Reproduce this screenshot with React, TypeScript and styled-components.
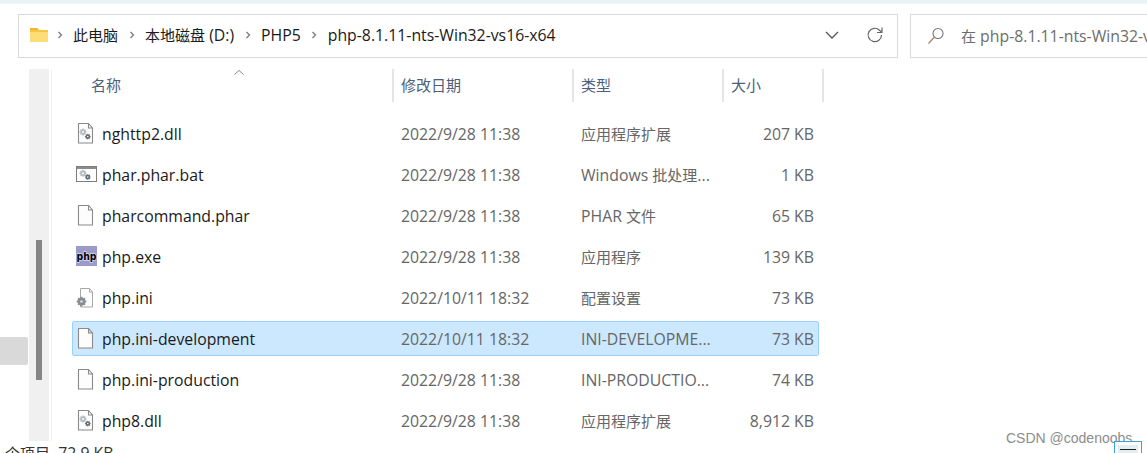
import React from "react";
import styled, { createGlobalStyle } from "styled-components";

const FONT = `"Open Sans", "Noto Sans", "Noto Sans CJK SC", sans-serif`;

const Global = createGlobalStyle`
  html, body { margin: 0; padding: 0; background: #fff; }
  * { box-sizing: border-box; }
`;

const Page = styled.div`
  position: relative;
  width: 1147px;
  height: 453px;
  overflow: hidden;
  background: #fff;
  font-family: ${FONT};
  font-size: 15.8px;
  display: flex;
  flex-direction: column;
`;

const Cjk = styled.span`
  font-size: 15px;
  font-family: "Noto Sans CJK SC", sans-serif;
`;

const Mixed = ({ text }: { text: string }) => (
  <>
    {text.split(/([\u4e00-\u9fff]+)/).map((part, i) =>
      i % 2 === 1 ? <Cjk key={i}>{part}</Cjk> : part
    )}
  </>
);

const TopStrip = styled.div`
  height: 4px;
  flex: none;
  background: #e7f3f6;
  border-bottom: 1px solid #f0f5f6;
`;

const Toolbar = styled.div`
  flex: none;
  display: flex;
  gap: 12px;
  padding: 10px 0 0 18px;
  height: 65px;
`;

const AddressBar = styled.div`
  width: 880px;
  height: 44px;
  border: 1px solid #d9d9d9;
  display: flex;
  align-items: center;
  padding: 0 0 2px 11px;
  color: #1a1a1a;
`;

const FolderSlot = styled.span`
  display: flex;
  flex: none;
  margin-right: -3px;
`;

const Crumb = styled.span`
  white-space: nowrap;
`;

const CrumbSep = styled.span`
  width: 27px;
  display: flex;
  justify-content: center;
  flex: none;
`;

const AddressTools = styled.div`
  margin-left: auto;
  display: flex;
  align-items: center;
  gap: 26px;
  padding: 0 13px 0 0;
`;

const SearchBox = styled.div`
  flex: 1;
  height: 44px;
  border: 1px solid #d9d9d9;
  border-right: none;
  display: flex;
  align-items: center;
  padding: 0 0 1px 16px;
  gap: 16px;
  color: #6d6d6d;
  white-space: nowrap;
  overflow: hidden;
`;

const Body = styled.div`
  flex: 1;
  min-height: 0;
  display: flex;
`;

const NavPane = styled.div`
  width: 29px;
  flex: none;
  padding-top: 268px;
`;

const NavSelected = styled.div`
  width: 28px;
  height: 28px;
  background: #d9d9d9;
  border-radius: 0 2px 2px 0;
`;

const ScrollTrack = styled.div`
  width: 20px;
  flex: none;
  background: #f0f0f0;
  padding: 171px 0 0 7px;
`;

const ScrollThumb = styled.div`
  width: 6px;
  height: 140px;
  background: #858585;
`;

const ListPane = styled.div`
  flex: 1;
  margin-left: 2px;
  border-left: 1px solid #f3f3f3;
  padding-left: 20px;
`;

const HeaderRow = styled.div`
  position: relative;
  display: grid;
  grid-template-columns: 321px 180px 150px 101px;
  width: 752px;
  height: 33px;
  margin-bottom: 14px;
  color: #4c607a;
`;

const HeaderCell = styled.div<{ $first?: boolean; $last?: boolean }>`
  display: flex;
  align-items: center;
  margin-left: ${(p) => (p.$first ? "0" : "-1px")};
  padding: 0 0 3px ${(p) => (p.$first ? "19px" : "7px")};
  border-left: ${(p) => (p.$first ? "none" : "2px solid #e5e5e5")};
  border-right: ${(p) => (p.$last ? "2px solid #e5e5e5" : "none")};
`;

const SortCaret = styled.svg`
  position: absolute;
  left: 161px;
  top: 0;
`;

const Rows = styled.div`
  display: flex;
  flex-direction: column;
`;

const Row = styled.div<{ $selected?: boolean }>`
  display: grid;
  grid-template-columns: 321px 180px 150px 96px;
  width: 747px;
  height: 35px;
  margin-bottom: 6px;
  align-items: center;
  color: #666;
  background: ${(p) => (p.$selected ? "#cce8ff" : "transparent")};
  border: 1px solid ${(p) => (p.$selected ? "#99d1ff" : "transparent")};
  border-radius: 2px;
`;

const NameCell = styled.div`
  display: flex;
  align-items: center;
  color: #1a1a1a;
  padding-left: 3px;
`;

const IconBox = styled.span`
  width: 26px;
  height: 24px;
  flex: none;
  display: flex;
  align-items: center;
`;

const MetaCell = styled.div`
  padding-left: 7px;
  white-space: nowrap;
`;

const SizeCell = styled.div`
  text-align: right;
  padding-right: 6px;
`;

const StatusText = styled.div`
  flex: none;
  height: 12px;
  padding: 3px 0 0 5px;
  line-height: 18px;
  color: #333;
  white-space: nowrap;
`;

const Watermark = styled.div`
  position: absolute;
  left: 1006px;
  top: 430px;
  font-size: 14px;
  color: #8c8c8c;
  white-space: nowrap;
  font-family: "Liberation Sans", sans-serif;
`;

const MinButton = styled.div`
  position: absolute;
  left: 1114px;
  top: 441px;
  width: 28px;
  height: 14px;
  border: 1px solid #3aa3dc;
  background: #fff;
  padding: 3px 3px 0;
`;

const MinInner = styled.div`
  height: 100%;
  background: #e3eef2;
  padding: 4px 2px 0;
`;

const MinDash = styled.div`
  height: 1px;
  background: #222;
`;

const Chevron = () => (
  <svg width="8" height="10" viewBox="0 0 8 10">
    <path d="M2.5 2l3 3-3 3" fill="none" stroke="#7a7a7a" strokeWidth="1.3" />
  </svg>
);

const Folder = () => (
  <svg width="19" height="16" viewBox="0 0 19 16">
    <path d="M0 1h7l2 2h9v12H0z" fill="#f6c644" />
    <path d="M0 5h18v10H0z" fill="#fedd77" />
    <path d="M0 1h7l2 2H0z" fill="#eeb52e" />
  </svg>
);

const Gear = ({ x, y, r, c, hole = "#fff" }: { x: number; y: number; r: number; c: string; hole?: string }) => (
  <g>
    {[0, 45, 90, 135].map((a) => (
      <rect
        key={a}
        x={x - r * 0.28}
        y={y - r * 1.25}
        width={r * 0.56}
        height={r * 2.5}
        fill={c}
        transform={`rotate(${a} ${x} ${y})`}
      />
    ))}
    <circle cx={x} cy={y} r={r * 0.9} fill={c} />
    <circle cx={x} cy={y} r={r * 0.35} fill={hole} />
  </g>
);

const DocShape = () => (
  <path d="M2.5 1.5h10l4 4.5v15h-14z M12.5 1.5v4.5h4" fill="#fdfdfd" stroke="#8a8a8a" strokeWidth="1.1" />
);

const PlainDoc = () => (
  <svg width="20" height="23" viewBox="0 0 20 23">
    <DocShape />
  </svg>
);

const DllDoc = () => (
  <svg width="20" height="23" viewBox="0 0 20 23">
    <DocShape />
    <Gear x={7} y={10} r={2.8} c="#b4bbc1" />
    <Gear x={11.8} y={14.6} r={2.2} c="#5f686f" />
  </svg>
);

const BatIcon = () => (
  <svg width="21" height="17" viewBox="0 0 21 17">
    <rect x="0.5" y="0.5" width="20" height="15" fill="#fff" stroke="#7d7d7d" />
    <rect x="1" y="1" width="19" height="2" fill="#8c8c8c" />
    <Gear x={7} y={7.2} r={2.8} c="#b4bbc1" />
    <Gear x={11.8} y={11} r={2.2} c="#5f686f" />
  </svg>
);

const PhpText = styled.text`
  font-family: "DejaVu Sans", sans-serif;
  font-weight: 700;
  font-size: 11px;
  fill: #000;
  stroke: #dcdcf2;
  stroke-width: 1.5px;
  paint-order: stroke;
`;

const PhpIcon = () => (
  <svg width="21" height="21" viewBox="0 0 21 21">
    <rect width="21" height="20" fill="#9a9acb" />
    <PhpText x="10.5" y="13.5" textAnchor="middle" textLength="20" lengthAdjust="spacingAndGlyphs">
      php
    </PhpText>
  </svg>
);

const IniIcon = () => (
  <svg width="20" height="23" viewBox="0 0 20 23">
    <path d="M4.5 2.5h9l3 3.5v15h-12z M13.5 2.5v3.5h3" fill="#fdfdfd" stroke="#a8a8a8" strokeWidth="1" />
    <Gear x={5.5} y={15.5} r={3.8} c="#858c92" hole="#d8dcdf" />
  </svg>
);

type Kind = "dll" | "bat" | "doc" | "php" | "ini";

const iconFor: Record<Kind, React.ReactNode> = {
  dll: <DllDoc />,
  bat: <BatIcon />,
  doc: <PlainDoc />,
  php: <PhpIcon />,
  ini: <IniIcon />,
};

const files: { icon: Kind; name: string; date: string; type: string; size: string; selected?: boolean }[] = [
  { icon: "dll", name: "nghttp2.dll", date: "2022/9/28 11:38", type: "应用程序扩展", size: "207 KB" },
  { icon: "bat", name: "phar.phar.bat", date: "2022/9/28 11:38", type: "Windows 批处理...", size: "1 KB" },
  { icon: "doc", name: "pharcommand.phar", date: "2022/9/28 11:38", type: "PHAR 文件", size: "65 KB" },
  { icon: "php", name: "php.exe", date: "2022/9/28 11:38", type: "应用程序", size: "139 KB" },
  { icon: "ini", name: "php.ini", date: "2022/10/11 18:32", type: "配置设置", size: "73 KB" },
  { icon: "doc", name: "php.ini-development", date: "2022/10/11 18:32", type: "INI-DEVELOPME...", size: "73 KB", selected: true },
  { icon: "doc", name: "php.ini-production", date: "2022/9/28 11:38", type: "INI-PRODUCTIO...", size: "74 KB" },
  { icon: "dll", name: "php8.dll", date: "2022/9/28 11:38", type: "应用程序扩展", size: "8,912 KB" },
];

const crumbs = ["此电脑", "本地磁盘 (D:)", "PHP5", "php-8.1.11-nts-Win32-vs16-x64"];

export default function App() {
  return (
    <Page>
      <Global />
      <TopStrip />
      <Toolbar>
        <AddressBar>
          <FolderSlot>
            <Folder />
          </FolderSlot>
          {crumbs.map((c) => (
            <React.Fragment key={c}>
              <CrumbSep>
                <Chevron />
              </CrumbSep>
              <Crumb>
                <Mixed text={c} />
              </Crumb>
            </React.Fragment>
          ))}
          <AddressTools>
            <svg width="16" height="10" viewBox="0 0 16 10">
              <path d="M2 2l6 6 6-6" fill="none" stroke="#555" strokeWidth="1.3" />
            </svg>
            <svg width="18" height="18" viewBox="0 0 18 18">
              <path d="M15.5 9a6.7 6.7 0 1 1-2-4.8L15.5 6" fill="none" stroke="#666" strokeWidth="1.2" />
              <path d="M16 1.5V6.5h-5" fill="none" stroke="#666" strokeWidth="1.2" />
            </svg>
          </AddressTools>
        </AddressBar>
        <SearchBox>
          <svg width="18" height="18" viewBox="0 0 18 18" style={{ flex: "none" }}>
            <circle cx="11" cy="6.5" r="5" fill="none" stroke="#777" strokeWidth="1.1" />
            <path d="M7.5 10L1.5 16.5" stroke="#a8866a" strokeWidth="1.3" />
          </svg>
          <span>
            <Mixed text="在 php-8.1.11-nts-Win32-vs16-x64 中搜索" />
          </span>
        </SearchBox>
      </Toolbar>
      <Body>
        <NavPane>
          <NavSelected />
        </NavPane>
        <ScrollTrack>
          <ScrollThumb />
        </ScrollTrack>
        <ListPane>
          <HeaderRow>
            <SortCaret width="12" height="7" viewBox="0 0 12 7">
              <path d="M1.5 5.5L6 1.5l4.5 4" fill="none" stroke="#888" strokeWidth="1" />
            </SortCaret>
            <HeaderCell $first>
              <Mixed text="名称" />
            </HeaderCell>
            <HeaderCell>
              <Mixed text="修改日期" />
            </HeaderCell>
            <HeaderCell>
              <Mixed text="类型" />
            </HeaderCell>
            <HeaderCell $last>
              <Mixed text="大小" />
            </HeaderCell>
          </HeaderRow>
          <Rows>
            {files.map((f) => (
              <Row key={f.name} $selected={f.selected}>
                <NameCell>
                  <IconBox>{iconFor[f.icon]}</IconBox>
                  {f.name}
                </NameCell>
                <MetaCell>{f.date}</MetaCell>
                <MetaCell>
                  <Mixed text={f.type} />
                </MetaCell>
                <SizeCell>{f.size}</SizeCell>
              </Row>
            ))}
          </Rows>
        </ListPane>
      </Body>
      <StatusText>
        <Mixed text="个项目" />
        &nbsp;&nbsp;72.9 KB
      </StatusText>
      <Watermark>CSDN @codenoobs</Watermark>
      <MinButton>
        <MinInner>
          <MinDash />
        </MinInner>
      </MinButton>
    </Page>
  );
}
